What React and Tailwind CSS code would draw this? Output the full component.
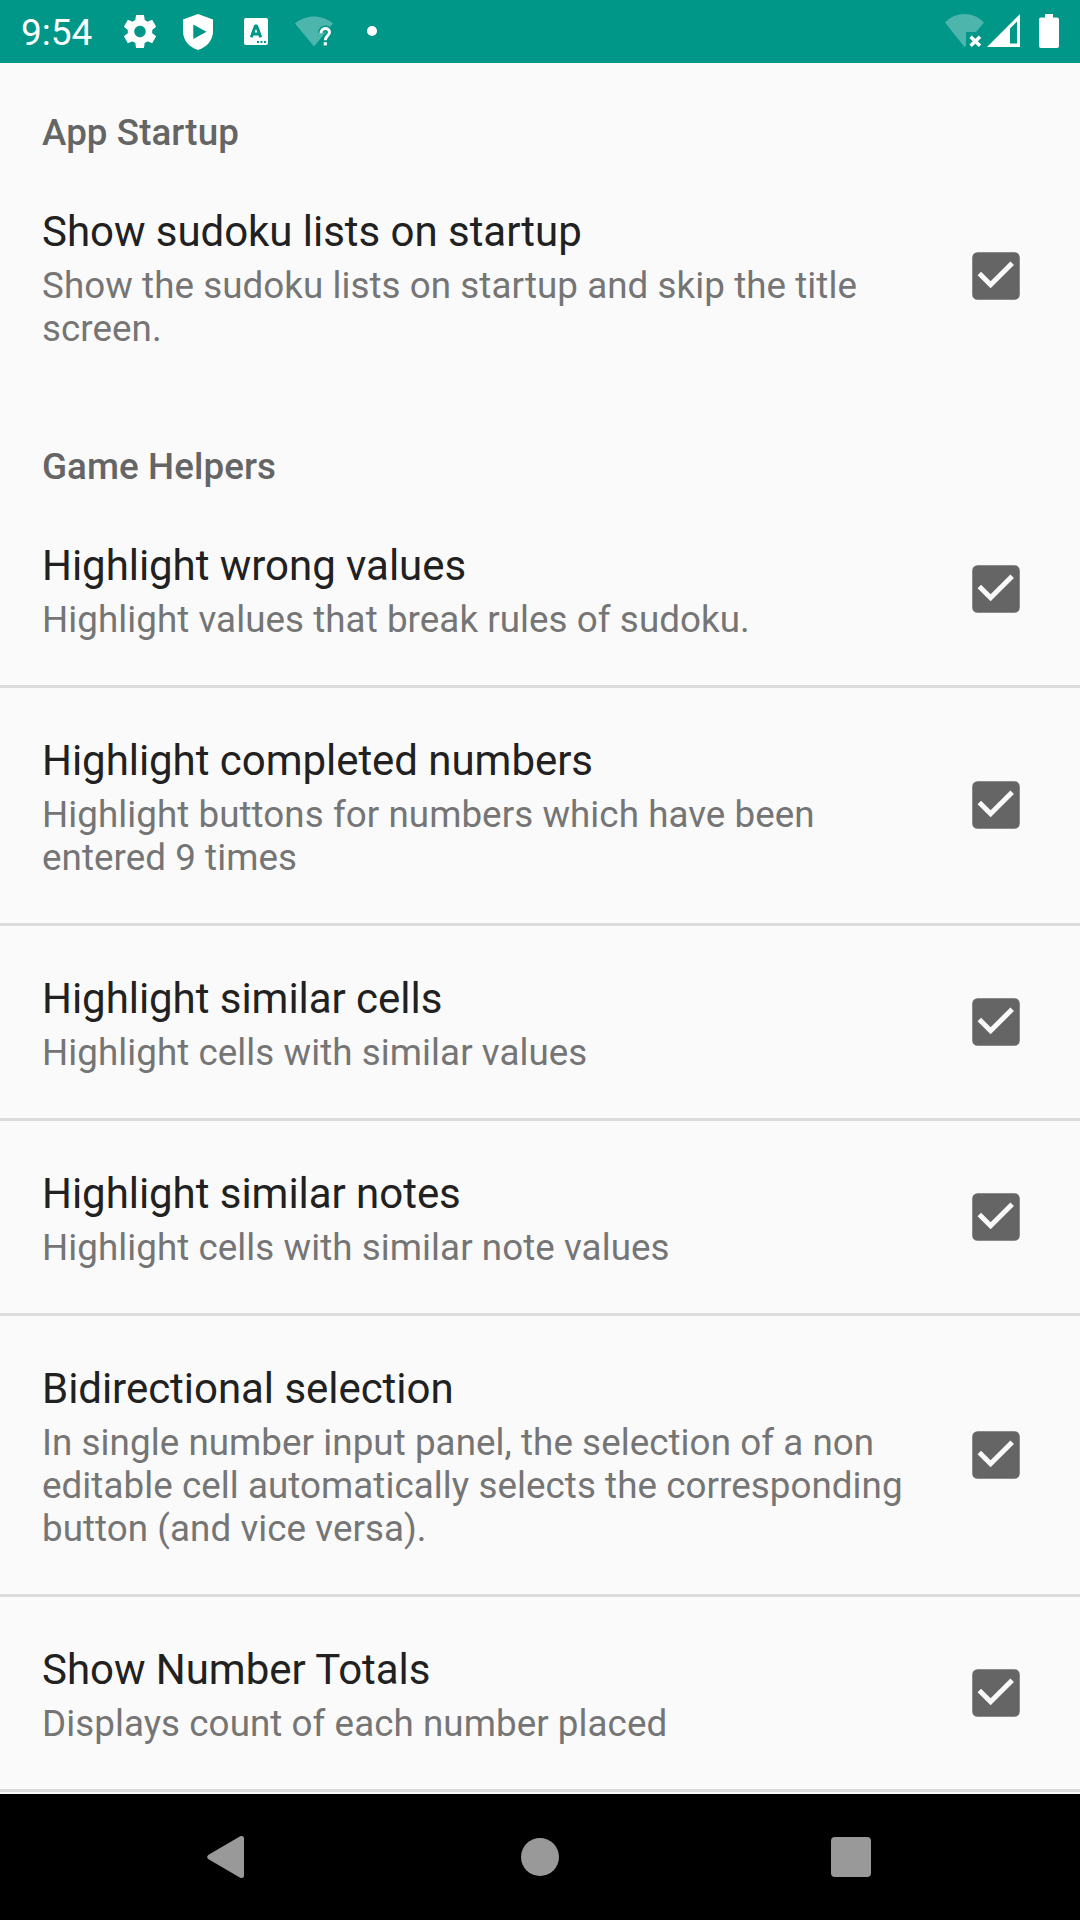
import React from "react";

const SECTIONS = [
  {
    title: "App Startup",
    items: [
      ["Show sudoku lists on startup", "Show the sudoku lists on startup and skip the title screen."],
    ],
  },
  {
    title: "Game Helpers",
    items: [
      ["Highlight wrong values", "Highlight values that break rules of sudoku."],
      ["Highlight completed numbers", "Highlight buttons for numbers which have been entered 9 times"],
      ["Highlight similar cells", "Highlight cells with similar values"],
      ["Highlight similar notes", "Highlight cells with similar note values"],
      [
        "Bidirectional selection",
        "In single number input panel, the selection of a non editable cell automatically selects the corresponding button (and vice versa).",
      ],
      ["Show Number Totals", "Displays count of each number placed"],
    ],
  },
];

function StatusBar() {
  return (
    <header className="flex h-[63px] shrink-0 items-start bg-[#009688] text-white">
      <div className="ml-[21px] mt-[11px] w-[103px] text-[37px] leading-[43px]">9:54</div>
      {/* settings */}
      <svg className="mt-[15px] h-[33px] w-[32px]" viewBox="2.2 2 19.6 20" preserveAspectRatio="none" fill="currentColor">
        <path d="M19.44 12.99l-.01.02c.04-.33.08-.67.08-1.01 0-.34-.03-.66-.07-.99l.01.02 2.44-1.92-2.43-4.22-2.87 1.16.01.01c-.52-.4-1.09-.74-1.71-1h.01L14.44 2H9.57l-.44 3.07h.01c-.62.26-1.19.6-1.71 1l.01-.01-2.88-1.17-2.44 4.22 2.44 1.92.01-.02c-.04.33-.07.65-.07.99 0 .34.03.68.08 1.01l-.01-.02-2.1 1.65-.33.26 2.43 4.2 2.88-1.15-.02-.04c.53.41 1.1.75 1.73 1.01h-.03L9.58 22h4.85s.03-.18.06-.42l.38-2.65h-.01c.62-.26 1.2-.6 1.73-1.01l-.02.04 2.88 1.15 2.43-4.2s-.14-.12-.33-.26l-2.11-1.66zM12 15.5c-1.93 0-3.5-1.57-3.5-3.5s1.57-3.5 3.5-3.5 3.5 1.57 3.5 3.5-1.57 3.5-3.5 3.5z" />
      </svg>
      {/* play protect shield */}
      <svg className="ml-[27px] mt-[14px] h-[36px] w-[30px]" viewBox="0 0 30 36" fill="currentColor">
        <path fillRule="evenodd" d="M15 0L30 5.4V17.5C30 26 24 33.200 15 36C6 33.200 0 26 0 17.500V5.400ZM10.300 10.500V25L23.500 17.800Z" />
      </svg>
      {/* keyboard input badge */}
      <svg className="ml-[31px] mt-[18px] h-[27px] w-[24px]" viewBox="0 0 24 27">
        <rect width="24" height="27" rx="2" fill="white" />
        <path d="M7.300 19.300L11.400 8H12.600L16.700 19.300M9 16H15" fill="none" stroke="#009688" strokeWidth="3" strokeLinejoin="round" />
        <path d="M13 23h2v2h-2zM16.500 23h2v2h-2zM20 23h2v2h-2z" fill="#009688" />
      </svg>
      {/* wifi without internet */}
      <svg className="ml-[27px] mt-[16px] h-[31px] w-[38px]" viewBox="0 0 38 31">
        <path d="M0 7.500C11 -1.800 27 -1.800 38 7.500L19 30.500Z" fill="#4db6ac" />
        <g fill="none" stroke="#009688" strokeWidth="6">
          <path d="M26 17C26 11 34.500 11.200 34.500 16C34.500 19.300 30.300 19.500 30.300 24.200V30" />
        </g>
        <path d="M26 17.300C26 11 34.500 11.200 34.500 16.300C34.500 19.600 30.300 19.800 30.300 24.200" fill="none" stroke="white" strokeWidth="3" />
        <rect x="28.700" y="26.200" width="3.200" height="3.200" fill="white" />
      </svg>
      <div className="ml-[34px] mt-[26px] size-[10px] rounded-full bg-white" />
      {/* wifi disconnected */}
      <svg className="ml-auto mt-[14px] h-[33px] w-[39px]" viewBox="0 0 39 33">
        <path d="M0 8.500C11 -2.800 28 -2.800 39 8.500L31 18H21V31.500L19.500 33Z" fill="white" fillOpacity=".3" />
        <path d="M25.600 22.700L35 31.700M35 22.700L25.600 31.700" stroke="white" strokeWidth="3.500" />
      </svg>
      {/* cell signal */}
      <svg className="ml-[3px] mt-[14px] h-[33px] w-[33px]" viewBox="0 0 33 33" fill="white">
        <path fillRule="evenodd" d="M33 0V33H0ZM23 14.500V29.500H30V7.500Z" />
      </svg>
      {/* battery */}
      <svg className="ml-[19px] mr-[21px] mt-[14px] h-[34px] w-[20px]" viewBox="0 0 20 34" fill="white">
        <path d="M6 0H14V3.500H18Q20 3.500 20 5.500V32Q20 34 18 34H2Q0 34 0 32V5.500Q0 3.500 2 3.500H6Z" />
      </svg>
    </header>
  );
}

function Checkbox() {
  return (
    <svg className="ml-[62px] size-12 shrink-0" viewBox="0 0 48 48" role="checkbox" aria-checked="true">
      <rect x=".25" y=".25" width="47.500" height="47.500" rx="5.300" fill="#656565" />
      <path d="M7.300 21.500L18.600 32.800L40.200 11.200" fill="none" stroke="#fafafa" strokeWidth="5" />
    </svg>
  );
}

function Preference({ title, summary, divider }) {
  return (
    <div className={divider ? "border-b-[3px] border-[#dcdcdc]" : ""}>
      <div className="flex items-center pb-[44px] pl-[42px] pt-[48px]">
        <div className="w-[868px] shrink-0">
          <div className="text-[42px] leading-[49px] tracking-[-0.04px] text-[#212121]">{title}</div>
          <div className="mt-2 text-[36.75px] leading-[43px] tracking-[0.06px] text-[#757575]">{summary}</div>
        </div>
        <div className="-mt-[4.2px] flex">
          <Checkbox />
        </div>
      </div>
    </div>
  );
}

function NavBar() {
  return (
    <nav className="flex h-[126px] shrink-0 items-center bg-black text-[#999999]">
      <svg className="ml-[207px] h-[42px] w-[37px]" viewBox="0 0 37 42" fill="currentColor" stroke="currentColor" strokeWidth="5" strokeLinejoin="round">
        <path d="M34.500 2.500V39.500L2.800 21Z" />
      </svg>
      <div className="ml-[277px] size-[38px] rounded-full bg-current" />
      <div className="ml-[272px] size-10 rounded-[4px] bg-current" />
    </nav>
  );
}

export default function App() {
  return (
    <div className="flex h-[1920px] w-[1080px] flex-col overflow-hidden bg-[#fafafa] font-['Roboto',sans-serif]">
      <StatusBar />
      <main className="flex-1 overflow-hidden">
        {SECTIONS.map((section, i) => (
          <section key={section.title} className={i > 0 ? "pt-[3px]" : ""}>
            <h2 className="h-24 pl-[42px] pt-[48px] text-[36.75px] font-medium leading-[43px] tracking-[0.08px] text-[#656565]">{section.title}</h2>
            {section.items.map(([title, summary]) => (
              <Preference key={title} title={title} summary={summary} divider={i > 0} />
            ))}
          </section>
        ))}
      </main>
      <NavBar />
    </div>
  );
}
